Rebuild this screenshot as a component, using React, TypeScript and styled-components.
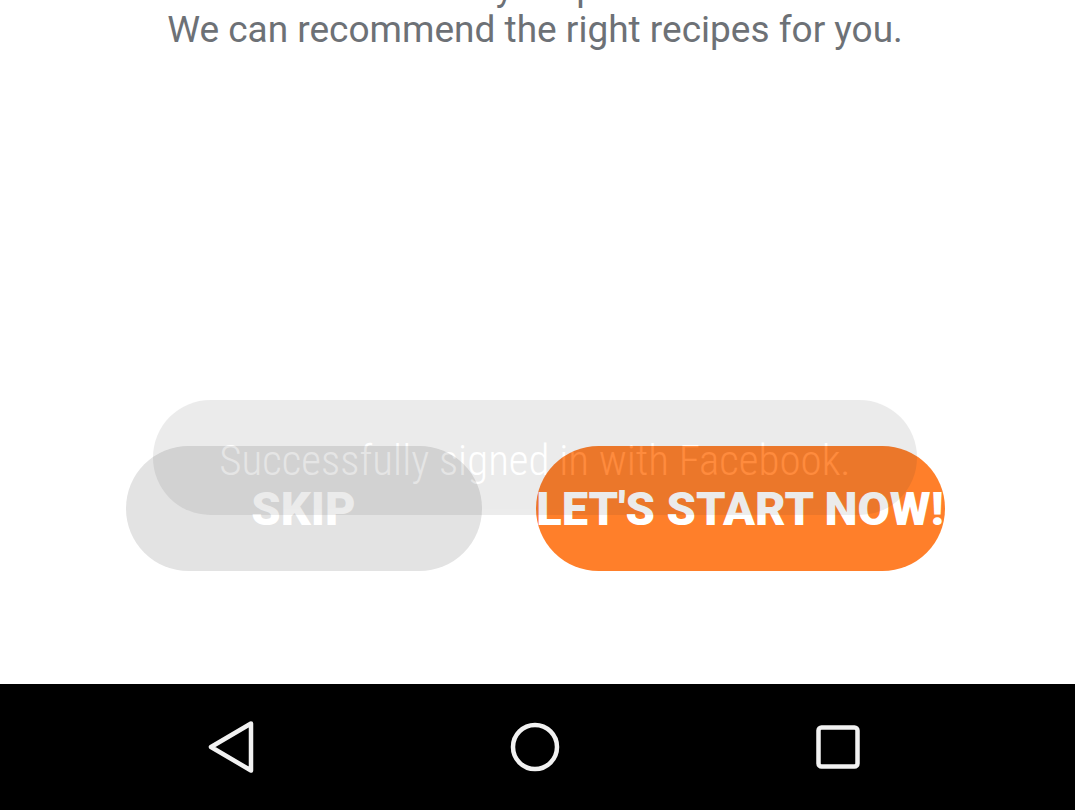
import styled, { createGlobalStyle } from 'styled-components';

const GlobalStyle = createGlobalStyle`
  html, body {
    margin: 0;
    padding: 0;
    background: #fff;
    overflow: hidden;
  }
  * {
    box-sizing: border-box;
  }
`;

const Screen = styled.div`
  display: flex;
  flex-direction: column;
  height: 100vh;
  font-family: Roboto, 'Liberation Sans', sans-serif;
`;

const Content = styled.main`
  flex: 1;
  display: flex;
  flex-direction: column;
  align-items: center;
  padding-right: 5px;
  overflow: hidden;
`;

const Intro = styled.p`
  margin: -33px 0 0;
  font-size: 37px;
  line-height: 42px;
  color: #6d7176;
  text-align: center;
  white-space: nowrap;
`;

const Actions = styled.div`
  position: relative;
  display: flex;
  gap: 54px;
  margin-top: 395px;
`;

const Pill = styled.button<{ $primary?: boolean }>`
  display: flex;
  align-items: center;
  justify-content: center;
  width: ${(p) => (p.$primary ? '409px' : '356px')};
  height: 125px;
  padding: 0;
  border: none;
  border-radius: 63px;
  background: ${(p) => (p.$primary ? '#ff7f2a' : '#e3e3e3')};
  color: #fff;
  font-family: Roboto, 'Liberation Sans', sans-serif;
  font-size: 47px;
  font-weight: 900;
  white-space: nowrap;
  overflow: visible;
`;

const Toast = styled.div`
  position: absolute;
  top: -46px;
  left: 50%;
  width: 764px;
  height: 115px;
  transform: translateX(-50%);
  display: flex;
  align-items: center;
  justify-content: center;
  padding-top: 4px;
  border-radius: 58px;
  background: #2e2e2e;
  color: #fff;
  opacity: 0.09;
  pointer-events: none;
`;

const ToastText = styled.span`
  font-family: 'Roboto Condensed', Roboto, sans-serif;
  font-stretch: 80%;
  font-weight: 300;
  font-size: 43px;
  white-space: nowrap;
`;

const NavBar = styled.nav`
  flex: 0 0 126px;
  display: flex;
  justify-content: center;
  align-items: center;
  padding-right: 5px;
  background: #000;
`;

const NavKey = styled.div`
  width: 303px;
  display: flex;
  justify-content: center;
  align-items: center;
`;

export default function App() {
  return (
    <Screen>
      <GlobalStyle />
      <Content>
        <Intro>
          Let us know your preferences.
          <br />
          We can recommend the right recipes for you.
        </Intro>
        <Actions>
          <Pill>SKIP</Pill>
          <Pill $primary>LET'S START NOW!</Pill>
          <Toast>
            <ToastText>Successfully signed in with Facebook.</ToastText>
          </Toast>
        </Actions>
      </Content>
      <NavBar>
        <NavKey>
          <svg width="50" height="54" viewBox="0 0 50 54">
            <path
              d="M44 3.5 L4 27 L44 50.5 Z"
              fill="none"
              stroke="#f2f2f2"
              strokeWidth="4.5"
              strokeLinejoin="round"
            />
          </svg>
        </NavKey>
        <NavKey>
          <svg width="54" height="54" viewBox="0 0 54 54">
            <circle cx="27" cy="27" r="22" fill="none" stroke="#f2f2f2" strokeWidth="4.5" />
          </svg>
        </NavKey>
        <NavKey>
          <svg width="48" height="48" viewBox="0 0 48 48">
            <rect x="4.5" y="4.5" width="39" height="39" rx="3" fill="none" stroke="#f2f2f2" strokeWidth="4.5" />
          </svg>
        </NavKey>
      </NavBar>
    </Screen>
  );
}
